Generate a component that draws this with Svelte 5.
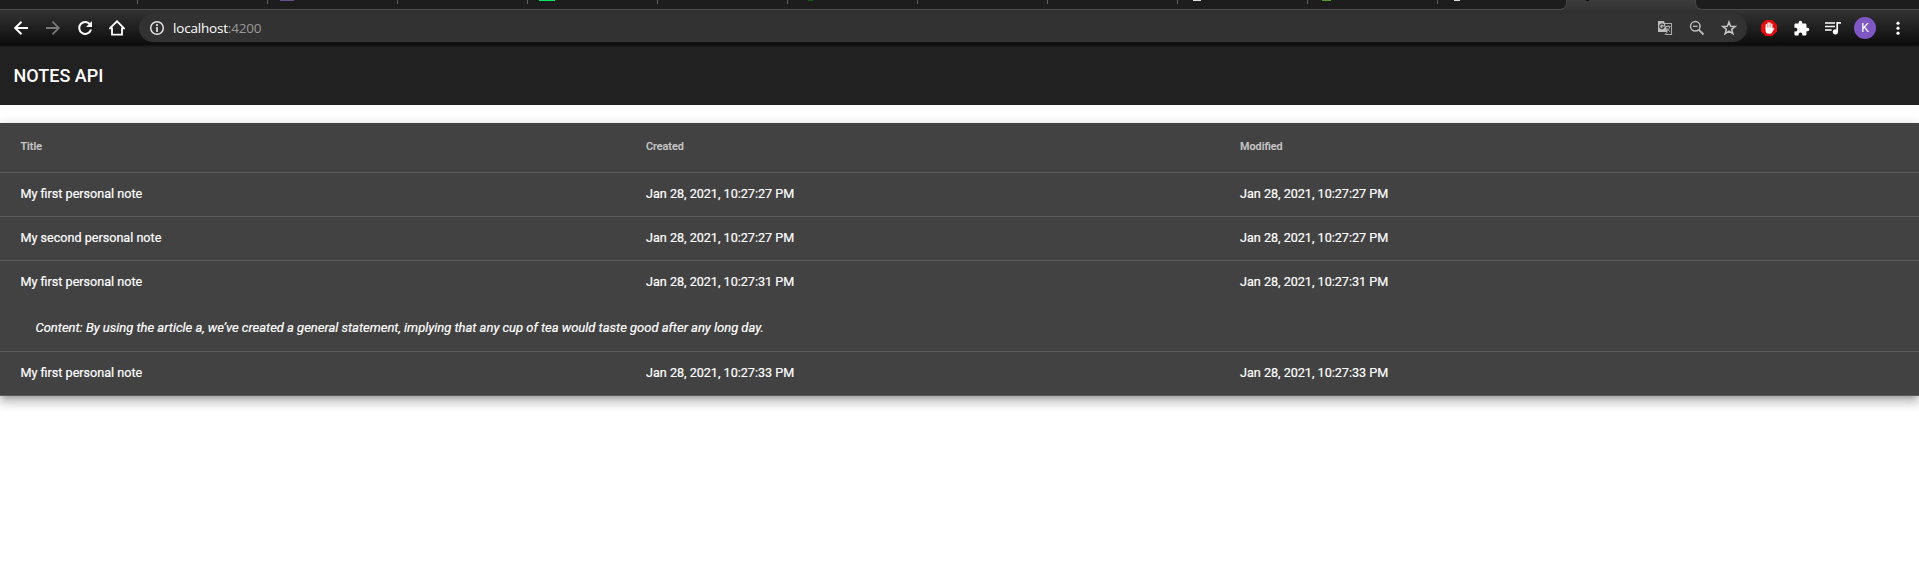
<script>
  const tabs = [
    { width: 138 }, { width: 130 }, { width: 130, mark: 'purple' }, { width: 130 }, { width: 130, mark: 'green' },
    { width: 130 }, { width: 130, mark: 'forest' }, { width: 130 }, { width: 130 }, { width: 130, mark: 'white' },
    { width: 130, mark: 'lime' }, { width: 129, mark: 'pale' }
  ];
  const notes = [
    { title: 'My first personal note', date: 'Jan 28, 2021, 10:27:27 PM' },
    { title: 'My second personal note', date: 'Jan 28, 2021, 10:27:27 PM' },
    {
      title: 'My first personal note',
      date: 'Jan 28, 2021, 10:27:31 PM',
      content: 'By using the article a, we’ve created a general statement, implying that any cup of tea would taste good after any long day.'
    },
    { title: 'My first personal note', date: 'Jan 28, 2021, 10:27:33 PM' }
  ];
</script>

<div class="browser">
  <div class="tabs">
    <div class="idle">
      {#each tabs as tab, i}
        <div class="tab" class:last={i === tabs.length - 1} style="width: {tab.width}px">{#if tab.mark}<i class={tab.mark}></i>{/if}</div>
      {/each}
    </div>
    <div class="active"><i></i></div>
    <div class="rest"></div>
  </div>
  <div class="toolbar">
    <div class="nav">
      <svg width="16" height="16" viewBox="0 0 16 16"><path d="M15 8H2.5M8.5 1.7 2.2 8l6.3 6.3" fill="none" stroke="#fff" stroke-width="2" /></svg>
      <svg width="16" height="16" viewBox="0 0 16 16"><path d="M1 8h12.5M7.500 1.700 13.800 8l-6.300 6.300" fill="none" stroke="#777" stroke-width="1.800" /></svg>
      <svg width="16" height="16" viewBox="0 0 16 16"><path d="M13.300 4.700A6 6 0 1 0 14 9.500" fill="none" stroke="#fff" stroke-width="2" /><path d="M15 1v6H9z" fill="#fff" /></svg>
      <svg width="16" height="16" viewBox="0 0 16 16"><path d="M.8 8.400 8 1.300l7.200 7.100H13v6.300H3V8.400z" fill="none" stroke="#fff" stroke-width="1.800" /></svg>
    </div>
    <div class="address">
      <svg width="16" height="16" viewBox="0 0 16 16"><circle cx="8" cy="8" r="6.300" fill="none" stroke="#e4e4e4" stroke-width="1.500" /><path d="M8 4v2M8 7v5" stroke="#e4e4e4" stroke-width="1.700" /></svg>
      <span class="url">localhost<span>:4200</span></span>
      <div class="page-actions">
        <svg width="16" height="16" viewBox="0 0 16 16">
          <path d="M7 3.500h7.500v11H8.500" fill="none" stroke="#aaa" stroke-width="1.100" />
          <path d="M1 1h6l3.600 11H1z" fill="#bbb" />
          <path d="M7 5.400A2.300 2.300 0 1 0 7.100 7H4.800" fill="none" stroke="#333" stroke-width="1.100" />
          <path d="M8.800 6.500h4.700M11.200 5.300v1.200M12.700 6.700c-.5 2-1.500 3.400-3.200 4.700M9.800 8c.8 1.600 1.800 2.800 3.200 3.700M8 14.500l2.300-2.600" fill="none" stroke="#aaa" stroke-width="1" />
        </svg>
        <svg width="16" height="16" viewBox="0 0 16 16"><circle cx="6.300" cy="6.300" r="4.800" fill="none" stroke="#bbb" stroke-width="1.500" /><path d="m9.700 9.700 4.800 4.800" stroke="#bbb" stroke-width="1.900" /><path d="M4 6.300h4.600" stroke="#bbb" stroke-width="1.300" /></svg>
        <svg width="16" height="16" viewBox="0 0 16 16"><path d="m8 2 1.600 4.200 4.600.2-3.600 2.900 1.300 4.400L8 11.200l-3.900 2.500 1.300-4.400-3.600-2.900 4.600-.2z" fill="none" stroke="#c4c4c4" stroke-width="1.500" /></svg>
      </div>
    </div>
    <div class="extensions">
      <svg width="16" height="16" viewBox="0 0 16 16">
        <path d="M4.700 0h6.600L16 4.700v6.600L11.300 16H4.700L0 11.300V4.700z" fill="#e40d0d" />
        <path d="M5.300 9V4.700M7.100 8V3M8.900 8V3M10.700 9V4.300" stroke="#fff" stroke-width="1.400" stroke-linecap="round" />
        <path d="M4.600 7.500h6.800l.2 1.300 1-1c.6-.3 1 .1.700.7l-2.200 4c-.5.800-1.200 1.200-2.200 1.200H7.500c-1.700 0-2.900-1.200-2.900-3z" fill="#fff" />
      </svg>
      <svg width="17" height="17" viewBox="0 0 24 24"><path d="M20.500 11H19V7c0-1.100-.9-2-2-2h-4V3.500a2.500 2.500 0 0 0-5 0V5H4c-1.100 0-2 .9-2 2v3.800h1.500a2.700 2.700 0 0 1 0 5.400H2V20c0 1.100.9 2 2 2h3.800v-1.500a2.700 2.700 0 0 1 5.400 0V22H17c1.100 0 2-.9 2-2v-4h1.500a2.500 2.500 0 0 0 0-5z" fill="#fff" /></svg>
      <svg class="queue" width="17" height="16" viewBox="0 0 17 16"><path d="M0 3h10M0 6.500h10M0 10h6.700M12.200 12V2.900H16" fill="none" stroke="#fff" stroke-width="1.700" /><circle cx="10.400" cy="11.800" r="2.600" fill="#fff" /></svg>
      <div class="avatar">K</div>
      <svg width="4" height="16" viewBox="0 0 4 16"><g fill="#fff"><circle cx="2" cy="3.200" r="1.600" /><circle cx="2" cy="8.200" r="1.600" /><circle cx="2" cy="13.200" r="1.600" /></g></svg>
    </div>
  </div>
</div>

<header>NOTES API</header>

<main>
  <div class="row head"><span>Title</span><span>Created</span><span>Modified</span></div>
  {#each notes as note}
    <div class="note">
      <div class="row"><span>{note.title}</span><span>{note.date}</span><span>{note.date}</span></div>
      {#if note.content}<div class="content">Content: {note.content}</div>{/if}
    </div>
  {/each}
</main>

<style>
  :global(body) { background: #fff; font-family: Roboto, sans-serif; }
  :global(#app) { display: flow-root; padding-bottom: 40px; }
  svg { display: block; flex: none; }
  .browser { height: 47px; background: linear-gradient(#3c3c3c, #333 10px, #0c0c0c 45px, #191919 46px); }
  .tabs { display: flex; height: 10px; }
  .idle, .rest { box-sizing: border-box; background: #1d1d1d; border-bottom: 1px solid #4c4c4c; height: 10px; }
  .idle { display: flex; width: 1567px; border-right: 1px solid #444; border-bottom-right-radius: 7px; }
  .rest { flex: 1; border-left: 1px solid #444; border-bottom-left-radius: 7px; }
  .tab { box-sizing: border-box; flex: none; height: 9px; padding-left: 11px; background: linear-gradient(#5d5d5d, #5d5d5d) right top / 1px 4px no-repeat; }
  .last { background: none; }
  .tab i, .active i { display: block; height: 1px; }
  .purple { width: 14px; margin-left: 1px; background: #674c8c; }
  .green { width: 16px; background: #00e660; }
  .forest { width: 5px; margin-left: 9px; background: #0a6212; }
  .white { width: 8px; margin-left: 4px; background: #ddd; }
  .lime { width: 9px; margin-left: 3px; background: #4b9f2b; }
  .pale { width: 6px; margin-left: 5px; background: #ddd; }
  .active { width: 128px; }
  .active i { width: 3px; margin-left: 19px; background: #101020; }
  .toolbar { display: flex; align-items: center; height: 36px; }
  .nav { display: flex; gap: 16px; width: 126px; padding-left: 13px; }
  .address { box-sizing: border-box; display: flex; align-items: center; width: 1608px; height: 28px; padding: 0 10px; border-radius: 14px; background: #323232; }
  .url { margin-left: 8px; font: 13.5px "Open Sans", sans-serif; letter-spacing: -.19px; color: #fff; }
  .url span { color: #999; }
  .page-actions { display: flex; gap: 16px; margin-left: auto; }
  .extensions { display: flex; align-items: center; margin-left: 14px; gap: 16px; }
  .queue { margin: 0 1px 0 -1px; }
  .avatar { display: flex; align-items: center; justify-content: center; width: 22px; height: 22px; margin: 0 4px 0 -5px; border-radius: 50%; background: #7e57c2; color: #fff; font-size: 12px; }
  header { box-sizing: border-box; display: flex; align-items: center; height: 58px; padding: 0 0 2px 13.500px; background: #212121; color: #fff; font-size: 18px; font-weight: 500; }
  main { margin-top: 18px; background: #424242; color: #fff; font-size: 12.6px; -webkit-text-stroke: .2px; box-shadow: 0 4.500px 4.500px -2.700px rgba(0, 0, 0, .2), 0 7.200px 9px 1px rgba(0, 0, 0, .14), 0 2.700px 12.600px 2px rgba(0, 0, 0, .12); }
  .row { box-sizing: border-box; display: grid; grid-template-columns: 625.5px 594px 1fr; align-items: center; height: 43px; padding: 0 0 2px 20.5px; }
  .head { height: 50px; padding-bottom: 3px; border-bottom: 1px solid #5b5b5b; color: #c6c6c6; font-size: 10.8px; font-weight: 500; }
  .note { border-bottom: 1px solid #5b5b5b; }
  .content { box-sizing: border-box; display: flex; align-items: center; height: 47px; padding: 0 0 1px 35.5px; font-size: 13px; font-style: italic; letter-spacing: -.02px; }
</style>
